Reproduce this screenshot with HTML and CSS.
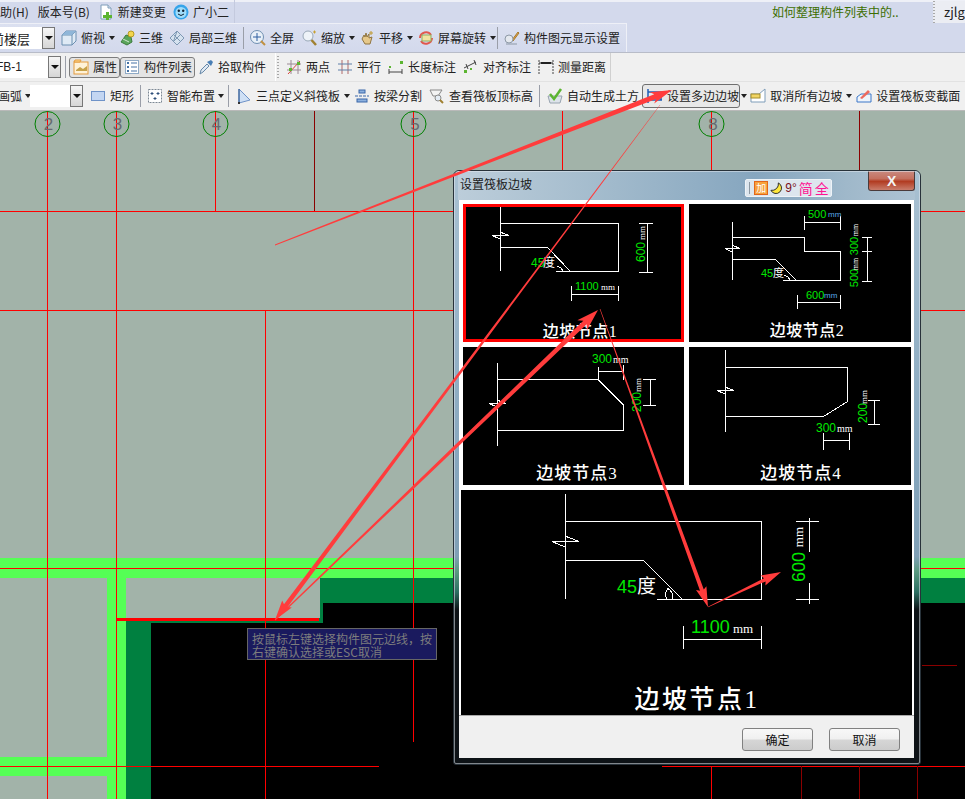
FILE: index.html
```html
<!DOCTYPE html>
<html lang="zh-CN">
<head>
<meta charset="utf-8">
<title>设置筏板边坡</title>
<link rel="stylesheet" href="styles.css">
</head>
<body>
<div class="app">
  <header class="menubar">
    <div class="menu-left">
      <span class="cut-h">助(H)</span>
      <span>版本号(B)</span>
      <span class="tool tool-doc"><svg class="ic" viewBox="0 0 16 16"><path d="M3 1h7l3 3v11H3z" fill="#fff" stroke="#7f9db9"/><path d="M10 1v3h3" fill="#dce6f0" stroke="#7f9db9"/><path d="M8 8h3v3h3v3h-3v2H8v-2H5v-3h3z" fill="#5cb531"/></svg>新建变更</span>
      <span class="tool"><svg class="ic" viewBox="0 0 16 16"><circle cx="8" cy="8" r="7.5" fill="#35a4ea"/><circle cx="8" cy="8.5" r="5.5" fill="#9fdcfa"/><circle cx="5.8" cy="6.8" r="1.2" fill="#123"/><circle cx="10.2" cy="6.8" r="1.2" fill="#123"/><path d="M5 10q3 3 6 0" fill="none" stroke="#123"/></svg>广小二</span>
    </div>
    <span class="news">如何整理构件列表中的..</span>
    <div class="user"><i class="grip"></i><span>zjlg</span></div>
  </header>

  <div class="row row-view">
    <div class="combo combo-floor"><span class="combo-text floor-text">前楼层</span><b class="combo-btn"></b></div>
    <span class="tool"><svg class="ic" viewBox="0 0 16 16"><path d="M1 5l4-4h10v10l-4 4H1z" fill="#dfeaf5" stroke="#6b8fb0"/><path d="M1 5h10v10M11 5l4-4" fill="none" stroke="#6b8fb0"/><path d="M1 5l4-4h10l-4 4z" fill="#8fb6d8"/></svg>俯视<i class="caret"></i></span>
    <span class="tool"><svg class="ic" viewBox="0 0 16 16"><path d="M2 12l5-7 5 2 1 5-5 3z" fill="#5aa55a" stroke="#3c7a3c"/><circle cx="12" cy="4" r="3" fill="#f3d64e" stroke="#b89b20"/><path d="M4 9l6 3" stroke="#d0e8d0"/></svg>三维</span>
    <span class="tool"><svg class="ic" viewBox="0 0 16 16"><path d="M1 8l7-7 7 7-7 7z" fill="#d5e2ef" stroke="#7d98b3"/><path d="M4.5 4.500l7 7M8 1l-3.500 10.500M11.500 4.500l-7 7" stroke="#7d98b3" fill="none"/></svg>局部三维</span>
    <i class="sep"></i>
    <span class="tool"><svg class="ic" viewBox="0 0 16 16"><circle cx="7" cy="7" r="6.500" fill="#e8f0f8" stroke="#6f8fb0"/><path d="M7 3v8M3 7h8" stroke="#2f5fa0"/><path d="M11 11l4 4" stroke="#c09040" stroke-width="2"/></svg>全屏</span>
    <span class="tool nudge-1"><svg class="ic" viewBox="0 0 16 16"><circle cx="7" cy="6" r="5" fill="#eef3f8" stroke="#9aa9b8"/><path d="M10.500 10l4.500 5" stroke="#a08030" stroke-width="2.500"/><path d="M12 2h3M13.500 .5v3" stroke="#c8a030"/></svg>缩放<i class="caret"></i></span>
    <span class="tool"><svg class="ic" viewBox="0 0 16 16"><path d="M3 9l2-4 1 2 1-4 1 4 2-3v4l3-1-2 7H6z" fill="#e6c88a" stroke="#8f7440"/><path d="M12 1v4M10 3h4" stroke="#c09a30"/></svg>平移<i class="caret"></i></span>
    <span class="tool nudge-1"><svg class="ic" viewBox="0 0 16 16"><path d="M2 8a6 6 0 0 1 11-3" fill="none" stroke="#e2574c" stroke-width="2"/><path d="M14 8a6 6 0 0 1-11 3" fill="none" stroke="#e2574c" stroke-width="2"/><rect x="4" y="5" width="9" height="6" fill="#f1e3a0" stroke="#8fb060"/></svg>屏幕旋转<i class="caret"></i></span>
    <i class="sep sep-near"></i>
    <span class="tool"><svg class="ic" viewBox="0 0 16 16"><path d="M8 10l6-8 1 1-6 8z" fill="#e2a54a" stroke="#a77a2d"/><circle cx="5" cy="9" r="4" fill="#e4e8ee" stroke="#8d99a6"/><path d="M2 14h11" stroke="#8d99a6"/></svg>构件图元显示设置</span>
  </div>

  <div class="row row-props">
    <div class="combo combo-name"><span class="combo-text name-text">FB-1</span><b class="combo-btn"></b></div>
    <i class="sep sep-props"></i>
    <div class="pressed-group">
      <span class="tool pressed"><svg class="ic" viewBox="0 0 16 16"><rect x="1" y="3" width="14" height="12" fill="#fff2d8" stroke="#e39a3c"/><path d="M1 3h6l1-2H2z" fill="#ffd98e" stroke="#e39a3c"/><path d="M3 11l4-3 3 2 4-3v5H3z" fill="#c6a24a"/></svg>属性</span>
      <span class="tool pressed"><svg class="ic" viewBox="0 0 16 16"><rect x="1.500" y="1.500" width="13" height="13" fill="#fff" stroke="#8faac6"/><path d="M3 4h2M3 8h2M3 12h2" stroke="#4673a6" stroke-width="2"/><path d="M7 4h6M7 8h6M7 12h6" stroke="#4673a6"/></svg><span class="pressed-label">构件列表</span></span>
    </div>
    <span class="tool"><svg class="ic" viewBox="0 0 16 16"><path d="M2 15l1-4 6-6 2 2-6 6z" fill="#dfe9f3" stroke="#6788a8"/><path d="M9 3l4-2 2 2-2 4z" fill="#4a7fb5"/></svg>拾取构件</span>
    <div class="measures">
      <i class="grip"></i>
      <span class="tool"><svg class="ic" viewBox="0 0 16 16"><path d="M5 1v14M12 1v14M1 5h14M1 11h14" stroke="#9c8a94" fill="none"/><path d="M2 15L14 2" stroke="#d6443c"/><rect x="3" y="9" width="3" height="3" fill="#5cb531"/><rect x="11" y="3" width="3" height="3" fill="#5cb531"/></svg>两点</span>
      <span class="tool"><svg class="ic" viewBox="0 0 16 16"><path d="M5 1v14M11 1v14" stroke="#b26a6a" fill="none"/><path d="M1 5h14M1 11h14" stroke="#5f7fa8" fill="none"/></svg>平行</span>
      <span class="tool"><svg class="ic" viewBox="0 0 16 16"><path d="M1 10v5M14 10v5M1 13h13" stroke="#444" fill="none"/><rect x="1" y="7" width="2" height="2" fill="#5cb531"/><rect x="12" y="2" width="3" height="3" fill="#5cb531"/></svg>长度标注</span>
      <span class="tool"><svg class="ic" viewBox="0 0 16 16"><path d="M1 9l12-6" stroke="#444" fill="none"/><path d="M3 5l2 5M11 1l2 5" stroke="#444" fill="none"/><rect x="1" y="11" width="3" height="3" fill="#5cb531"/><rect x="7" y="9" width="2" height="2" fill="#5cb531"/></svg>对齐标注</span>
      <span class="tool"><svg class="ic" viewBox="0 0 16 16"><path d="M1 1v14M15 1v14" stroke="#444" stroke-dasharray="2 1" fill="none"/><path d="M1 4h14" stroke="#222" fill="none"/><path d="M3 4h10" stroke="#222" stroke-width="2"/></svg>测量距离</span>
    </div>
  </div>

  <div class="row row-draw">
    <span class="tool arc-tool"><span>画弧</span><i class="caret"></i></span>
    <div class="combo combo-blank"><span class="combo-text"></span><b class="combo-btn"></b></div>
    <span class="tool nudge-1"><svg class="ic" viewBox="0 0 16 16"><rect x="1.500" y="3.500" width="13" height="9" fill="#c3d6f2" stroke="#6f93c8"/></svg>矩形</span>
    <i class="sep"></i>
    <span class="tool"><svg class="ic" viewBox="0 0 16 16"><rect x="1.500" y="1.500" width="13" height="13" fill="#fff" stroke="#7d8894" stroke-dasharray="2 1"/><path d="M5 4v3M3.500 5.500h3M11 4v3M9.500 5.500h3M8 9v3M6.500 10.500h3" stroke="#2f4f7a"/></svg>智能布置<i class="caret caret-small"></i></span>
    <i class="sep"></i>
    <span class="tool nudge-1"><svg class="ic" viewBox="0 0 16 16"><path d="M3 1l11 11-11 3z" fill="#cfe0f5" stroke="#6f93c8"/><path d="M3 1v14" stroke="#24508a"/><rect x="2" y="14" width="2" height="2" fill="#333"/></svg>三点定义斜筏板<i class="caret"></i></span>
    <span class="tool"><svg class="ic" viewBox="0 0 16 16"><path d="M1 8h14" stroke="#3a67a8" stroke-dasharray="3 1"/><rect x="5" y="2" width="6" height="3" fill="#8cb0de" stroke="#3a67a8"/><rect x="3" y="11" width="10" height="3" fill="#8cb0de" stroke="#3a67a8"/></svg>按梁分割</span>
    <span class="tool nudge-1"><svg class="ic" viewBox="0 0 16 16"><path d="M1 2h12l-4 6H4z" fill="#f3f3f3" stroke="#888"/><circle cx="9" cy="10" r="3" fill="#e4ecf4" stroke="#8b8b8b"/><path d="M11 12l3 3" stroke="#a08030" stroke-width="2"/></svg>查看筏板顶标高</span>
    <i class="sep"></i>
    <span class="tool nudge-1"><svg class="ic" viewBox="0 0 16 16"><path d="M1 8h14l-2 7H3z" fill="#dde3ea" stroke="#98a4b0"/><path d="M3 6l4 5 7-10" fill="none" stroke="#5cb531" stroke-width="2.500"/></svg>自动生成土方</span>
    <span class="tool tool-active"><svg class="ic" viewBox="0 0 16 16"><path d="M1 1v14M1 4h14M1 12h14" fill="none" stroke="#1f5cb5" stroke-width="1.500"/><path d="M14 4v8" stroke="#1f5cb5" stroke-width="1.500"/></svg>设置多边边坡</span>
    <i class="caret caret-after"></i>
    <span class="tool"><svg class="ic" viewBox="0 0 16 16"><path d="M1 6h8l6-5v13H1z" fill="#fff" stroke="#7f9db9"/><rect x="1" y="6" width="9" height="4" fill="#f1d564" stroke="#a58e2c"/></svg>取消所有边坡<i class="caret"></i></span>
    <span class="tool"><svg class="ic" viewBox="0 0 16 16"><path d="M1 9l4-3h10v8H1z" fill="#eef4fb" stroke="#3a77c8"/><path d="M4 10l8-8 2 2-8 7z" fill="#ee6a5e"/></svg>设置筏板变截面</span>
  </div>

  <main class="canvas">
    <svg class="drawing" viewBox="0 111 965 688" width="965" height="688">
      <rect class="bg-black" x="0" y="111" width="965" height="688"/>
      <rect class="bg-floor" x="0" y="111" width="965" height="447"/>
      <rect class="bg-bright" x="0" y="558" width="965" height="20"/>
      <rect class="bg-dark" x="320" y="578" width="645" height="25"/>
      <rect class="bg-dark" x="126" y="578" width="197" height="45"/>
      <rect class="bg-dark" x="126" y="623" width="25" height="176"/>
      <rect class="bg-floor" x="126" y="578" width="194" height="40"/>
      <rect class="bg-bright" x="107" y="578" width="19" height="221"/>
      <rect class="bg-floor" x="0" y="578" width="107" height="179"/>
      <rect class="bg-bright" x="0" y="757" width="107" height="19"/>
      <rect class="bg-floor" x="0" y="776" width="107" height="23"/>
      <path class="red" d="M0 211.500H965M0 310.500H965M0 568.500H965M0 766.500H379M662 766.500H965M47.500 111V799M116.500 111V799M215.500 111V211M265.500 310V799M413.500 111V742M562.500 111V211M711.500 111V211M711.500 766V799"/>
      <path class="maroon" d="M314.500 111V211M859.500 111V211M859.500 766V799M917.500 766V799M801.500 766V799M922 665.500H957"/>
      <rect class="red-fill" x="117" y="618" width="202" height="3"/>
      <g class="axis">
        <circle cx="47.500" cy="124" r="12.500"/><circle cx="116.500" cy="124" r="12.500"/><circle cx="215.500" cy="124" r="12.500"/><circle cx="413.500" cy="124" r="12.500"/><circle cx="711.500" cy="124" r="12.500"/>
      </g>
      <g class="axis-num">
        <text x="48.500" y="130">2</text><text x="117.500" y="130">3</text><text x="216.500" y="130">4</text><text x="415" y="130">5</text><text x="713" y="130">8</text>
      </g>
    </svg>
    <div class="hint">按鼠标左键选择构件图元边线，按<br>右键确认选择或ESC取消</div>
  </main>
</div>

<section class="dialog">
  <div class="titlebar">
    <span class="title">设置筏板边坡</span>
    <div class="ime">
      <i class="ime-sep"></i>
      <span class="ime-add">加</span>
      <svg class="ime-moon" viewBox="0 0 14 14"><path d="M9 1a6 6 0 1 1-8 8 7 7 0 0 0 8-8z" fill="#ffe83c" stroke="#222"/></svg>
      <span class="ime-deg">9°</span>
      <span class="ime-pink">简</span>
      <span class="ime-pink">全</span>
    </div>
    <button class="close" type="button">X</button>
  </div>
  <div class="client">
    <div class="thumbs">
      <div class="thumb thumb-on">
        <svg class="sheet" viewBox="463 204 221 138" width="221" height="138">
          <path class="w" d="M500.500 207V271M500.500 223.500H618.500V271.500H556M500.500 247.500H547.500L570.500 271.500M492 235.500L500 239V232L509 235.500H492M563 271.500a7 7 0 0 0-6-5M571.500 294.500H618.500M571.500 286V301M618.500 286V301M647.500 223V272M639 223.500H653M639 272.500H653"/>
          <text class="g t12" x="531" y="267">45</text><text class="wt t12" x="543" y="267">度</text>
          <text class="g t11" x="575" y="290">1100</text><text class="wt t9" x="601" y="290">mm</text>
          <text class="g t12 mid" transform="rotate(-90 645 252)" x="645" y="252">600</text>
          <text class="wt t9 mid" transform="rotate(-90 645 233)" x="645" y="233">mm</text>
          <text class="lab l16" x="580" y="337">边坡节点1</text>
        </svg>
      </div>
      <div class="thumb">
        <svg class="sheet" viewBox="689 204 222 138" width="222" height="138">
          <path class="w" d="M732.500 222V280M732.500 237.500H804.500V251.500H840.500V280.500H783M732.500 259.500H775.500L796.500 280.500M725 248.500L732 252V245L740 248.500H725M790 280.500a7 7 0 0 0-6-5M804.500 222.500H840.500M804.500 216V230M840.500 216V230M867.500 237V281M862 237.500H872M862 251.500H872M862 281.500H872M797.500 302.500H840.500M797.500 295V309M840.500 295V309"/>
          <text class="g t11" x="808" y="218">500</text><text class="b t8" x="828" y="217">mm</text>
          <text class="g t11" x="761" y="277">45</text><text class="wt t11" x="773" y="277">度</text>
          <text class="g t11 mid" transform="rotate(-90 858 246)" x="858" y="246">300</text>
          <text class="wt t8 mid" transform="rotate(-90 858 230)" x="858" y="230">mm</text>
          <text class="g t11 mid" transform="rotate(-90 858 278)" x="858" y="278">500</text>
          <text class="wt t8 mid" transform="rotate(-90 858 264)" x="858" y="264">mm</text>
          <text class="g t11" x="806" y="299">600</text><text class="b t8" x="824" y="298">mm</text>
          <text class="lab l16" x="807" y="336">边坡节点2</text>
        </svg>
      </div>
      <div class="thumb">
        <svg class="sheet" viewBox="463 347 221 138" width="221" height="138">
          <path class="w" d="M497.500 363V446M497.500 379.500H598L623.500 405V430.500H497.500M489 403.500L497 407V400L506 403.500H489M598.500 371.500H623.500M598.500 367V379M623.500 365V380M650.500 379V406M643 379.500H656M643 405.500H656"/>
          <text class="g t12" x="592" y="363">300</text><text class="wt t10" x="613" y="363">mm</text>
          <text class="g t12 mid" transform="rotate(-90 641 402)" x="641" y="402">200</text>
          <text class="wt t9 mid" transform="rotate(-90 641 385)" x="641" y="385">mm</text>
          <text class="lab l17" x="577" y="479">边坡节点3</text>
        </svg>
      </div>
      <div class="thumb">
        <svg class="sheet" viewBox="689 347 222 138" width="222" height="138">
          <path class="w" d="M725.500 350V432M725.500 367.500H847.500V401.500L823.500 416.500H725.500M717 390.500L725 394V387L734 390.500H717M874.500 400V424M868 400.500H880M868 424.500H880M823.500 440.500H849.500M823.500 433V450M849.500 433V450"/>
          <text class="g t12 mid" transform="rotate(-90 867 413)" x="867" y="413">200</text>
          <text class="wt t9 mid" transform="rotate(-90 867 397)" x="867" y="397">mm</text>
          <text class="g t12" x="816" y="432">300</text><text class="wt t10" x="837" y="432">mm</text>
          <text class="lab l17" x="801" y="479">边坡节点4</text>
        </svg>
      </div>
    </div>
    <div class="preview">
      <svg class="sheet" viewBox="461 490 452 225" width="452" height="225">
        <path class="w" d="M565.500 494V599M565.500 521.500H761.500V599.500H657M565.500 560.500H643.500L682.500 599.500M552 541.500L565 547V536L579 541.500H552M672 599.500a9 9 0 0 0-4-11 9 9 0 0 0-1 11M683.500 639.500H761.500M683.500 626V649M761.500 626V649M809.500 518V552M809.500 583V604M796 521.500H819M796 599.500H819"/>
        <text class="g t18" x="617" y="593">45</text><text class="wt t19" x="637" y="593">度</text>
        <text class="g t18" x="691" y="633">1100</text><text class="wt t13" x="733" y="633">mm</text>
        <text class="g t18 mid" transform="rotate(-90 805 567)" x="805" y="567">600</text>
        <text class="wt t13 mid" transform="rotate(-90 803 537)" x="803" y="537">mm</text>
        <text class="lab l25" x="697" y="708">边坡节点1</text>
      </svg>
    </div>
    <footer class="actions">
      <button class="btn" type="button">确定</button>
      <button class="btn" type="button">取消</button>
    </footer>
  </div>
</section>

<svg class="arrows" viewBox="0 0 965 799" width="965" height="799">
  <polygon points="274.900,244.600 654.300,94.300 649.800,92.200 672,90 654.200,103.400 656.100,98.900 275.100,245.400"/>
  <polygon points="659.800,104.900 660.200,105.100 287.600,606.900 291.800,607.600 275,620 282.200,600.400 284,604.300"/>
  <polygon points="274.700,619.600 583.300,320.700 577.300,320.200 598,310 586.900,330.200 586.700,324.300 275.300,620.400"/>
  <polygon points="599.700,309.100 600.300,308.900 703.800,589.400 706.400,586.300 708,607 696,590.100 700,590.800"/>
  <polygon points="707.900,606.700 764,578.200 760.600,575.600 781,572 765.400,585.600 765.600,581.400 708.100,607.300"/>
</svg>
</body>
</html>
```
FILE: styles.css
```css
* { box-sizing: border-box; }
html, body { margin: 0; padding: 0; }
body {
  width: 965px;
  height: 799px;
  overflow: hidden;
  position: relative;
  font: 12px/1 "Noto Sans CJK SC", "Liberation Sans", sans-serif;
  color: #222;
  background: #000;
}
.app { display: flex; flex-direction: column; width: 965px; height: 799px; background: #d3d9ec; }

.menubar {
  height: 23px;
  flex: none;
  display: flex;
  align-items: center;
  background: linear-gradient(#eef0f7 0, #eef0f7 2px, #d3d9ec 2px);
}
.menu-left {
  width: 235px;
  height: 23px;
  display: flex;
  align-items: center;
  gap: 8px;
  border-right: 1px solid #c4cade;
  white-space: nowrap;
}
.cut-h { margin-right: 1px; }
.tool-doc { gap: 2px; margin-right: -1px; }
.news { margin-left: 537px; color: #3c6e00; white-space: nowrap; width: 161px; }
.user {
  flex: 1;
  height: 22px;
  display: flex;
  align-items: center;
  gap: 9px;
  background: #ebedf3;
  font-size: 13px;
  overflow: hidden;
}

.row { flex: none; display: flex; align-items: center; white-space: nowrap; }
.row-view {
  height: 29px;
  width: 627px;
  gap: 6px;
  background: linear-gradient(#dbe0f0, #d3d9ec);
  border-top: 1px solid #eef0f7;
  border-right: 1px solid #eef0f7;
}
.row-props {
  height: 29px;
  gap: 4px;
  background: #f0f0f0;
  border-top: 1px solid #b8bcc8;
}
.row-draw {
  height: 30px;
  gap: 6px;
  background: #f0f0f0;
  border-top: 1px solid #e2e2e2;
  border-bottom: 1px solid #b9b9b9;
}

.tool { display: inline-flex; align-items: center; gap: 4px; flex: none; }
.ic { width: 16px; height: 16px; flex: none; display: block; }
.nudge-1 { margin-left: 1px; }

.caret {
  display: block;
  width: 0;
  height: 0;
  flex: none;
  border-left: 3.5px solid transparent;
  border-right: 3.5px solid transparent;
  border-top: 4px solid #222;
  margin-right: -2px;
}
.caret-small { margin-left: -1px; margin-right: -2px; border-left-width: 3px; border-right-width: 3px; }
.caret-after { margin-left: -5px; margin-right: -3px; }

.sep { display: block; width: 1px; height: 22px; background: #9a9ea8; flex: none; }
.sep-near { margin-left: -3px; }
.sep-props { margin-right: -1px; }
.grip {
  display: block;
  width: 2px;
  height: 22px;
  flex: none;
  background: repeating-linear-gradient(#a8a8a8 0 1px, transparent 1px 3px);
}

.combo { display: flex; align-items: stretch; height: 22px; flex: none; overflow: hidden; background: #fff; }
.combo-text { flex: 1; display: flex; align-items: center; min-width: 0; font-size: 13px; }
.combo-btn {
  width: 13px;
  flex: none;
  display: flex;
  align-items: center;
  justify-content: center;
  background: linear-gradient(#f6f6f6, #d6d6d6);
  border: 1px solid #777;
}
.combo-btn::after {
  content: "";
  border-left: 4px solid transparent;
  border-right: 4px solid transparent;
  border-top: 4px solid #111;
}
.combo-floor { width: 55px; }
.floor-text { margin-left: -9px; white-space: nowrap; }
.combo-name { width: 61px; }
.name-text { margin-left: -4px; font-family: "Liberation Sans", sans-serif; font-size: 12px; white-space: nowrap; }
.combo-blank { width: 53px; margin-left: -5px; }
.arc-tool { margin-left: -2px; gap: 3px; }

.pressed-group { display: flex; flex: none; margin-right: -1px; }
.pressed {
  height: 21px;
  padding: 0 2px 0 3px;
  background: #e4e4e4;
  border: 1px solid #7d7d7d;
  border-radius: 3px;
}
.pressed-label { font-size: 12px; }

.measures {
  flex: none;
  width: 336px;
  height: 28px;
  margin-left: 5px;
  display: flex;
  align-items: center;
  gap: 7px;
  border-left: 1px solid #fff;
  border-right: 1px solid #d0d0d0;
  padding-left: 1px;
}
.tool-active {
  height: 24px;
  margin-left: -3px;
  padding: 0 0 0 4px;
  background: #e8e8e8;
  border: 1px solid #6f6f6f;
  border-radius: 3px;
}

.canvas { position: relative; flex: none; height: 689px; }
.drawing { display: block; }
.bg-black { fill: #000; }
.bg-floor { fill: #a2b3a9; }
.bg-bright { fill: #55ff55; }
.bg-dark { fill: #008040; }
.red { fill: none; stroke: #ff0000; stroke-width: 1; shape-rendering: crispEdges; }
.maroon { fill: none; stroke: #8a0000; stroke-width: 1; shape-rendering: crispEdges; }
.red-fill { fill: #ff0000; }
.axis circle { fill: none; stroke: #008000; stroke-width: 1; }
.axis-num text {
  fill: #666a70;
  font: 17px "Liberation Sans", sans-serif;
  text-anchor: middle;
}

.hint {
  position: absolute;
  left: 247px;
  top: 517px;
  width: 190px;
  height: 32px;
  padding: 3px 0 0 4px;
  background: #1a1a5e;
  border: 1px solid #666;
  color: #7d7d7d;
  line-height: 13px;
  white-space: nowrap;
}

.dialog {
  position: absolute;
  left: 453px;
  top: 170px;
  width: 468px;
  height: 595px;
  padding: 0 6px 6px 5px;
  display: flex;
  flex-direction: column;
  border: 1px solid #28323a;
  border-radius: 6px 6px 3px 3px;
  outline: 1px solid rgba(225, 232, 238, .55);
  outline-offset: -2px;
  background: linear-gradient(#a9c1d2 0, #86a6bd 50%, #7f9fb5 65%, #5a9a80 67.500%, #2c6f62 71%, #0d1216 74%, #0d1216 100%);
}
.titlebar {
  height: 29px;
  flex: none;
  display: flex;
  align-items: flex-start;
  margin: 0 -1px 0 -1px;
  padding-left: 2px;
  background: linear-gradient(90deg, #bccdda 0, #a4bccd 30%, #86a6bf 65%, #9fb8ca 85%, #adc3d3 100%);
}
.title { margin-top: 7px; width: 288px; color: #1c1c1c; }
.ime {
  width: 88px;
  height: 18px;
  margin-top: 8px;
  display: flex;
  align-items: center;
  gap: 2px;
  padding-left: 3px;
  background: #dde6ee;
  border: 1px solid #eef3f7;
  border-radius: 2px;
}
.ime-sep { display: block; width: 1px; height: 12px; background: #8c98a2; margin-right: 2px; flex: none; }
.ime-add {
  width: 14px;
  height: 14px;
  flex: none;
  display: flex;
  align-items: center;
  justify-content: center;
  font-size: 10px;
  color: #fff;
  background: #f7a23c;
  border: 1px solid #e2661a;
}
.ime-moon { width: 13px; height: 13px; flex: none; }
.ime-deg { color: #7a1020; font: 12px "Liberation Sans", sans-serif; }
.ime-pink { color: #ff1493; font-size: 14px; }
.close {
  width: 47px;
  height: 20px;
  margin-left: 36px;
  padding: 0;
  border: 1px solid #4a3a3a;
  border-top: 0;
  border-radius: 0 0 3px 3px;
  color: #f4f4f4;
  font: bold 14px "Liberation Sans", sans-serif;
  background: linear-gradient(#c98a80 0, #c4705f 40%, #b23c22 55%, #c97d6c 100%);
}
.client {
  flex: 1;
  display: flex;
  flex-direction: column;
  background: #fff;
  border: 0;
  min-height: 0;
}
.thumbs {
  flex: none;
  display: grid;
  grid-template-columns: 221px 222px;
  grid-template-rows: 138px 138px;
  gap: 5px;
  padding: 4px 4px 5px;
}
.thumb { position: relative; background: #000; overflow: hidden; }
.thumb-on::after {
  content: "";
  position: absolute;
  inset: 0;
  border: 3px solid #ff0000;
}
.preview { flex: none; height: 225px; margin: 0 2px; background: #000; }
.sheet { display: block; }
.w { fill: none; stroke: #fff; stroke-width: 1; shape-rendering: crispEdges; }
.g { fill: #00e800; font-family: "Liberation Sans", sans-serif; }
.wt { fill: #fff; font-family: "Liberation Serif", "Noto Sans CJK SC", serif; }
.b { fill: #58a8e8; font-family: "Liberation Sans", sans-serif; }
.mid { text-anchor: middle; }
.t8 { font-size: 8px; }
.t9 { font-size: 9px; }
.t10 { font-size: 10px; }
.t11 { font-size: 11px; }
.t12 { font-size: 12px; }
.t13 { font-size: 13px; }
.t18 { font-size: 18px; }
.t19 { font-size: 19px; }
.lab {
  fill: #fff;
  font-family: "Liberation Serif", "Noto Sans CJK SC", serif;
  font-weight: 500;
  text-anchor: middle;
}
.l16 { font-size: 16px; letter-spacing: .5px; }
.l17 { font-size: 17px; letter-spacing: 1px; }
.l25 { font-size: 25px; letter-spacing: 2.5px; }
.actions {
  flex: 1;
  display: flex;
  justify-content: flex-end;
  align-items: flex-start;
  gap: 16px;
  padding: 12px 14px 0 0;
  background: #f0f0f0;
  border-top: 1px solid #aaa;
}
.btn {
  width: 71px;
  height: 23px;
  padding: 0;
  font: 12px "Noto Sans CJK SC", sans-serif;
  color: #111;
  border: 1px solid #808080;
  border-radius: 3px;
  background: linear-gradient(#f8f8f8 0, #f0f0f0 48%, #d6d6d6 52%, #cccccc 100%);
}

.arrows { position: absolute; left: 0; top: 0; pointer-events: none; }
.arrows polygon { fill: #ff3c3c; }
```
